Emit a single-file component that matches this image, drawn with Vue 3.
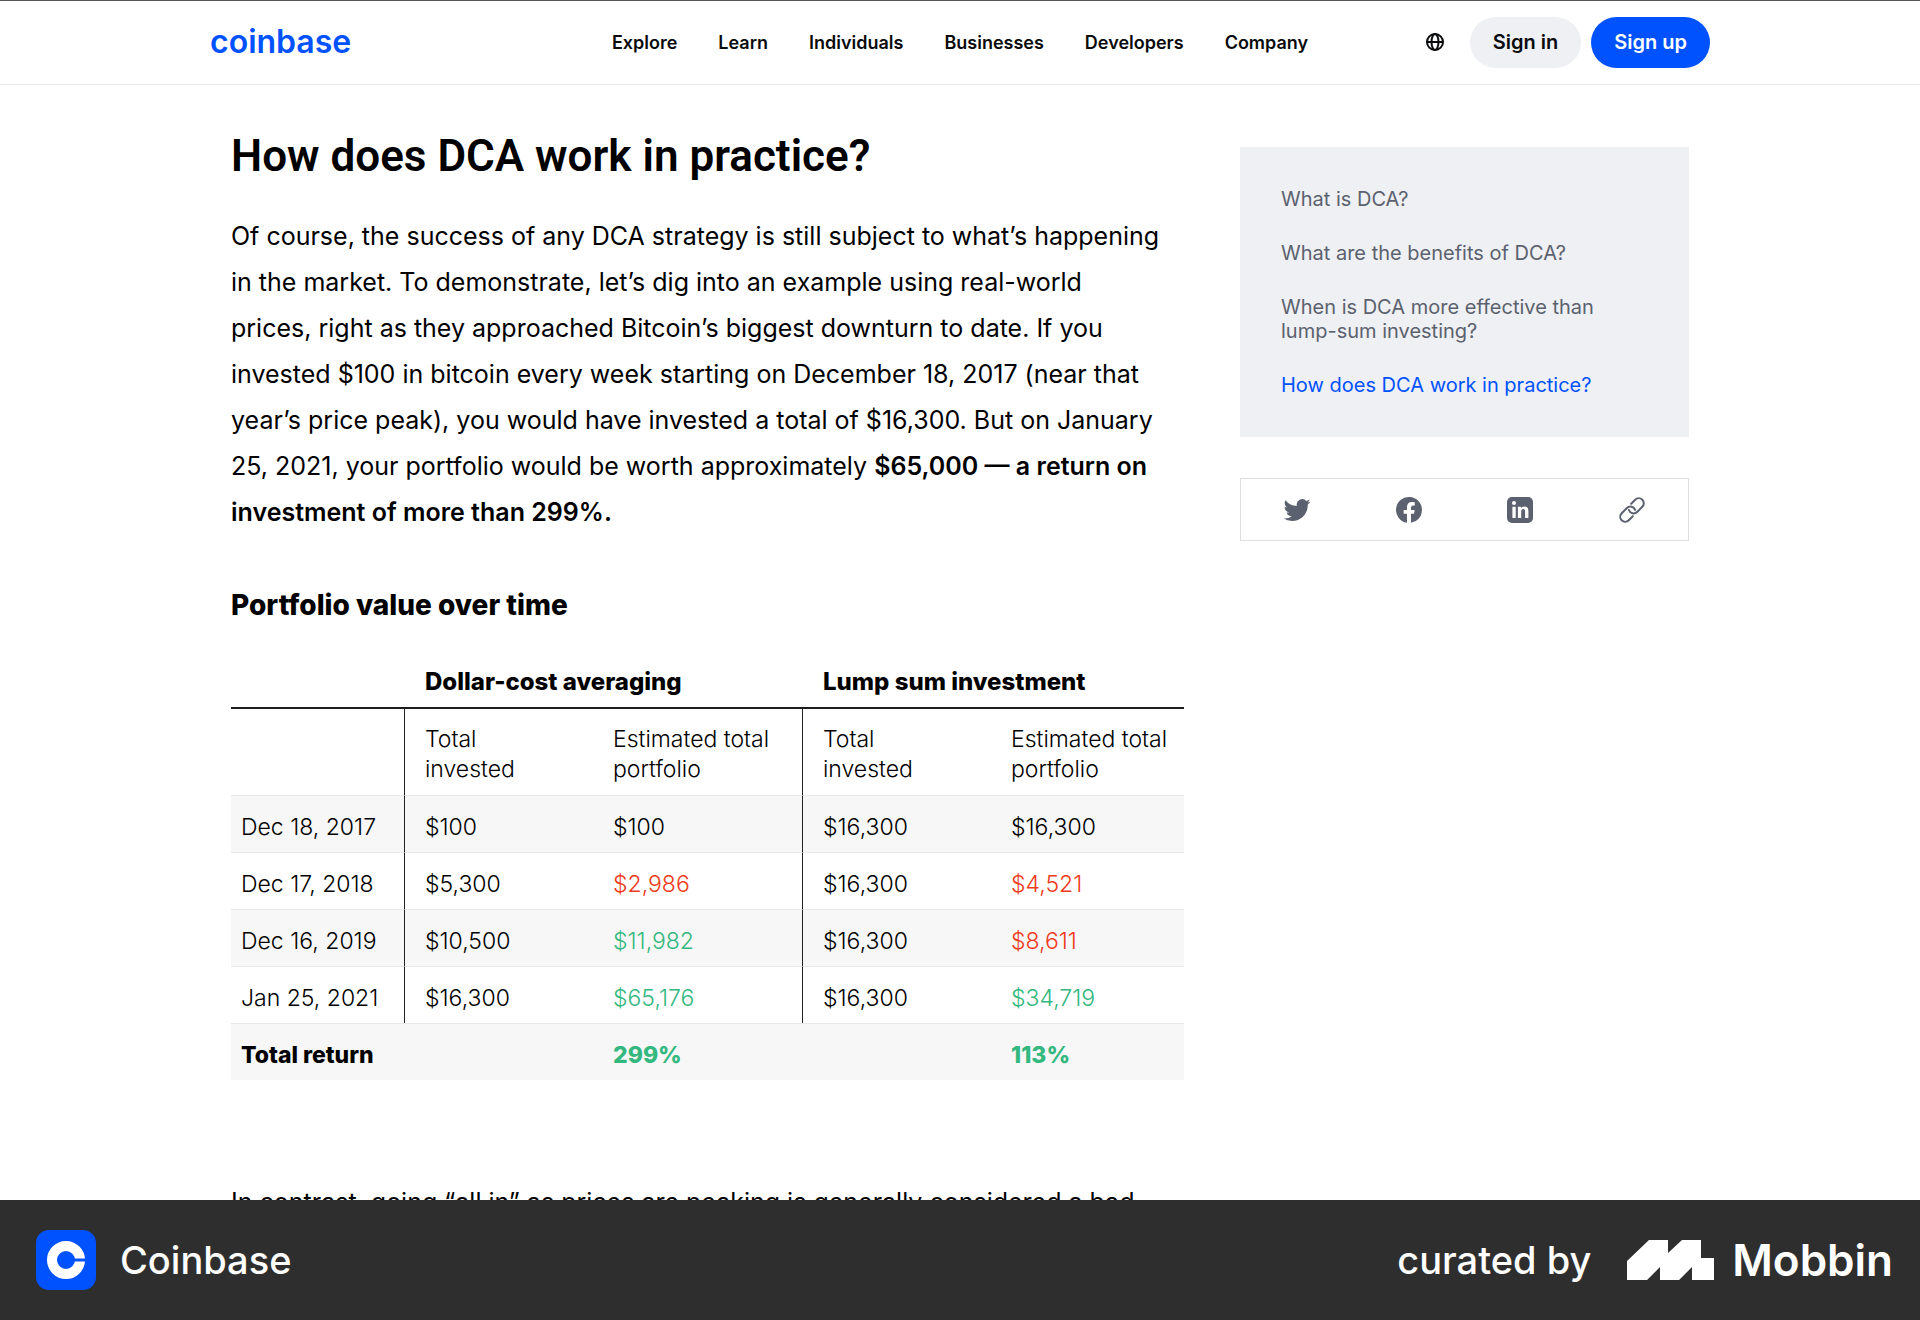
<script setup>
const navLinks = ['Explore', 'Learn', 'Individuals', 'Businesses', 'Developers', 'Company']

const sections = [
  { label: 'What is DCA?' },
  { label: 'What are the benefits of DCA?' },
  { label: 'When is DCA more effective than lump-sum investing?' },
  { label: 'How does DCA work in practice?', current: true }
]

const rows = [
  { date: 'Dec 18, 2017', dca: ['$100', '$100', ''], lump: ['$16,300', '$16,300', ''] },
  { date: 'Dec 17, 2018', dca: ['$5,300', '$2,986', 'loss'], lump: ['$16,300', '$4,521', 'loss'] },
  { date: 'Dec 16, 2019', dca: ['$10,500', '$11,982', 'gain'], lump: ['$16,300', '$8,611', 'loss'] },
  { date: 'Jan 25, 2021', dca: ['$16,300', '$65,176', 'gain'], lump: ['$16,300', '$34,719', 'gain'] }
]
</script>

<template>
  <div class="page">
    <header class="topbar">
      <div class="container topbar-inner">
        <a class="wordmark" href="#">coinbase</a>
        <nav class="nav" aria-label="Main">
          <a v-for="link in navLinks" :key="link" href="#">{{ link }}</a>
        </nav>
        <div class="actions">
          <button class="globe" type="button" aria-label="Language">
            <svg viewBox="0 0 18 18" width="18" height="18" fill="none" stroke="currentColor" stroke-width="2">
              <circle cx="9" cy="9" r="8" />
              <ellipse cx="9" cy="9" rx="3.5" ry="8" />
              <path d="M1 9h16" />
            </svg>
          </button>
          <button class="pill" type="button">Sign in</button>
          <button class="pill primary" type="button">Sign up</button>
        </div>
      </div>
    </header>

    <main class="container content">
      <article class="article">
        <h2>How does DCA work in practice?</h2>
        <p>
          Of course, the success of any DCA strategy is still subject to what’s happening<br />
          in the market. To demonstrate, let’s dig into an example using real-world<br />
          prices, right as they approached Bitcoin’s biggest downturn to date. If you<br />
          invested $100 in bitcoin every week starting on December 18, 2017 (near that<br />
          year’s price peak), you would have invested a total of $16,300. But on January<br />
          25, 2021, your portfolio would be worth approximately <strong>$65,000 — a return on<br />
          investment of more than 299%.</strong>
        </p>

        <h3 id="portfolio-title">Portfolio value over time</h3>
        <table aria-labelledby="portfolio-title">
          <colgroup>
            <col class="col-date" />
            <col class="col-invested" />
            <col class="col-dca" />
            <col class="col-invested" />
            <col />
          </colgroup>
          <thead>
            <tr class="groups">
              <td></td>
              <th colspan="2" scope="colgroup">Dollar-cost averaging</th>
              <th colspan="2" scope="colgroup">Lump sum investment</th>
            </tr>
            <tr class="labels">
              <td class="divider"></td>
              <th scope="col">Total<br />invested</th>
              <th scope="col" class="divider">Estimated total<br />portfolio</th>
              <th scope="col">Total<br />invested</th>
              <th scope="col">Estimated total<br />portfolio</th>
            </tr>
          </thead>
          <tbody>
            <tr v-for="row in rows" :key="row.date">
              <th scope="row" class="divider">{{ row.date }}</th>
              <td>{{ row.dca[0] }}</td>
              <td class="divider" :class="row.dca[2]">{{ row.dca[1] }}</td>
              <td>{{ row.lump[0] }}</td>
              <td :class="row.lump[2]">{{ row.lump[1] }}</td>
            </tr>
          </tbody>
          <tfoot>
            <tr>
              <th scope="row">Total return</th>
              <td></td>
              <td class="gain">299%</td>
              <td></td>
              <td class="gain">113%</td>
            </tr>
          </tfoot>
        </table>

        <p>In contrast, going “all in” as prices are peaking is generally considered a bad</p>
      </article>

      <aside class="sidebar">
        <nav class="toc" aria-label="On this page">
          <a v-for="s in sections" :key="s.label" href="#" :class="{ current: s.current }">{{ s.label }}</a>
        </nav>
        <div class="share">
          <a href="#" aria-label="Share on Twitter">
            <svg viewBox="0 0 24 24" width="28" height="28" fill="currentColor">
              <path d="M23.6 4.9c-.85.38-1.76.63-2.72.75a4.75 4.75 0 0 0 2.08-2.62c-.91.54-1.93.93-3 1.15a4.74 4.74 0 0 0-8.08 4.32A13.45 13.45 0 0 1 2.1 3.54a4.74 4.74 0 0 0 1.47 6.33 4.72 4.72 0 0 1-2.15-.6v.06a4.74 4.74 0 0 0 3.8 4.65 4.75 4.75 0 0 1-2.14.08 4.74 4.74 0 0 0 4.43 3.29A9.5 9.5 0 0 1 .5 19.31a13.4 13.4 0 0 0 7.26 2.13c8.71 0 13.47-7.22 13.47-13.47l-.01-.62A9.6 9.6 0 0 0 23.6 4.9z" />
            </svg>
          </a>
          <a href="#" aria-label="Share on Facebook">
            <svg viewBox="0 0 24 24" width="26" height="26" fill="currentColor">
              <path d="M24 12a12 12 0 1 0-13.88 11.85v-8.38H7.08V12h3.04V9.36c0-3 1.8-4.67 4.54-4.67 1.31 0 2.68.24 2.68.24v2.95h-1.51c-1.49 0-1.96.93-1.96 1.87V12h3.33l-.53 3.47h-2.8v8.38A12 12 0 0 0 24 12z" />
            </svg>
          </a>
          <a href="#" aria-label="Share on LinkedIn">
            <svg viewBox="0 0 26 26" width="26" height="26">
              <rect width="26" height="26" rx="5" fill="currentColor" />
              <g fill="#fff">
                <circle cx="7" cy="6" r="2" />
                <path d="M5.4 9.8h3.3V21H5.4zM10.9 9.8H14v1.5c.6-1 1.8-1.8 3.4-1.8 3.2 0 4 2 4 4.8V21h-3.3v-6c0-1.5-.2-2.9-1.9-2.9s-2 1.3-2 2.8V21h-3.3z" />
              </g>
            </svg>
          </a>
          <a href="#" aria-label="Copy link">
            <svg viewBox="0 0 26 26" width="26" height="26" fill="none" stroke="currentColor" stroke-width="2" stroke-linecap="round" stroke-linejoin="round">
              <path d="M12.2 6.7l4-4a5 5 0 0 1 7.1 7.1l-5.2 5.2a5 5 0 0 1-8.2-2" />
              <path d="M13.8 19.3l-4 4a5 5 0 0 1-7.1-7.1l5.2-5.2a5 5 0 0 1 8.2 2" />
            </svg>
          </a>
        </div>
      </aside>
    </main>

    <footer class="credit">
      <svg viewBox="0 0 60 60" width="60" height="60" aria-hidden="true">
        <rect width="60" height="60" rx="13" fill="#0052ff" />
        <circle cx="30" cy="30" r="14" fill="none" stroke="#fff" stroke-width="10" />
        <path d="M38 28.5h12v3H38z" fill="#0052ff" />
      </svg>
      <span class="app-name">Coinbase</span>
      <span class="curated">curated by</span>
      <svg viewBox="0 0 87 40" width="87" height="40" fill="#fff" aria-hidden="true">
        <path d="M0 21L22 0h19v13L55 0h19v18h13v22H65V27L52 40H33V27L20 40H0z" />
      </svg>
      <span class="brand">Mobbin</span>
    </footer>
  </div>
</template>

<style>
body {
  margin: 0;
}
</style>

<style scoped>
.page {
  display: flex;
  flex-direction: column;
  height: 100vh;
  overflow: hidden;
  background: #fff;
  color: #0a0b0d;
  font-family: Inter, "Noto Sans", sans-serif;
}

a {
  color: inherit;
  text-decoration: none;
}

button {
  border: 0;
  font: inherit;
  color: inherit;
  cursor: pointer;
}

svg {
  display: block;
  flex: none;
}

.container {
  box-sizing: border-box;
  width: 100%;
  max-width: 1500px;
  margin: 0 auto;
}

.topbar {
  flex: none;
  border-top: 1px solid #58565a;
  border-bottom: 1px solid #e8ebee;
}

.topbar-inner {
  display: grid;
  grid-template-columns: 1fr auto 1fr;
  align-items: center;
  height: 83px;
  padding-bottom: 1px;
}

.wordmark {
  color: #0052ff;
  font-size: 32px;
  font-weight: 600;
  line-height: 40px;
}

.nav {
  display: flex;
  gap: 41px;
  font-size: 18px;
  font-weight: 600;
}

.actions {
  display: flex;
  justify-content: flex-end;
  align-items: center;
  gap: 10px;
}

.globe {
  padding: 0;
  margin-right: 16px;
  background: none;
}

.pill {
  height: 51px;
  padding: 0 23px;
  border-radius: 26px;
  background: #eef0f3;
  font-size: 20px;
  font-weight: 600;
}

.pill.primary {
  background: #0052ff;
  color: #fff;
}

.content {
  display: flex;
  align-items: flex-start;
  gap: 56px;
  flex: 1;
  min-height: 0;
  padding: 0 21px;
  overflow: hidden;
}

.article {
  flex: 1;
  min-width: 0;
  padding-top: 45px;
  color: #000;
}

h2 {
  margin: 0 0 31px;
  font: 600 44px/52px Roboto, sans-serif;
}

p {
  margin: 0;
  font-size: 25px;
  line-height: 46px;
  white-space: nowrap;
}

strong {
  font-weight: 600;
}

h3 {
  margin: 53px 0 30px;
  font-size: 28px;
  font-weight: 800;
  line-height: 34px;
}

table {
  width: 100%;
  margin-bottom: 99px;
  border-spacing: 0;
  table-layout: fixed;
  font-size: 23px;
  line-height: 30px;
  text-align: left;
}

.col-date {
  width: 174px;
}

.col-invested {
  width: 188px;
}

.col-dca {
  width: 210px;
}

th,
td {
  box-sizing: border-box;
  padding: 0 0 0 20px;
  font-weight: 350;
}

.groups th,
.groups td {
  padding-top: 15px;
  padding-bottom: 10px;
  border-bottom: 2px solid #1d1d1f;
}

.groups th {
  font-size: 24px;
  font-weight: 800;
}

.labels th {
  padding-top: 15px;
  padding-bottom: 11px;
}

.divider {
  border-right: 1px solid #222;
}

tbody td,
tbody th,
tfoot td,
tfoot th {
  height: 57px;
  padding-top: 5px;
  border-top: 1px solid #e8e8e8;
}

tbody th,
tfoot th {
  padding-left: 10px;
}

tbody tr:nth-child(odd),
tfoot tr {
  background: #f7f7f7;
}

tfoot td,
tfoot th {
  font-weight: 800;
}

.gain {
  color: #33b87f;
}

.loss {
  color: #ee3a1b;
}

.sidebar {
  flex: none;
  width: 449px;
  padding-top: 62px;
}

.toc {
  display: flex;
  flex-direction: column;
  gap: 30px;
  padding: 40px 80px 40px 41px;
  background: #eef0f3;
  color: #5b616e;
  font-size: 20px;
  line-height: 24px;
}

.current {
  color: #0052ff;
}

.share {
  display: grid;
  grid-template-columns: repeat(4, 1fr);
  place-items: center;
  height: 61px;
  margin-top: 41px;
  border: 1px solid #dddfe2;
  color: #5b616e;
}

.credit {
  flex: none;
  display: flex;
  align-items: center;
  height: 120px;
  padding: 0 27px 0 36px;
  background: #2e2e2e;
  color: #fff;
  font-size: 38px;
  font-weight: 500;
  line-height: 48px;
}

.app-name {
  margin: 0 auto 0 24px;
}

.curated {
  margin-right: 36px;
}

.brand {
  margin-left: 18px;
  font-size: 44px;
  font-weight: 600;
}
</style>
